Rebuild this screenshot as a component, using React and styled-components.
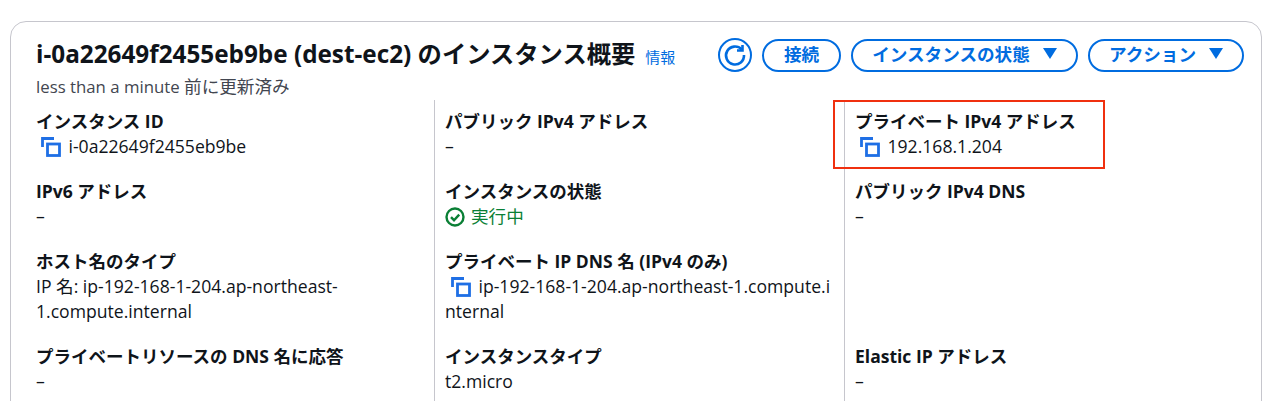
import React from 'react';
import styled, { createGlobalStyle } from 'styled-components';

const GlobalStyle = createGlobalStyle`
  html, body {
    margin: 0;
    height: 401px;
    overflow: hidden;
    background: #fff;
    font-family: "Open Sans", "Noto Sans CJK JP", sans-serif;
    color: #0f141a;
  }
`;

const Page = styled.div`
  height: 401px;
  overflow: hidden;
  padding: 21px 8px 0 10px;
  box-sizing: border-box;
`;

const Card = styled.div`
  position: relative;
  height: 420px;
  box-sizing: border-box;
  border: 1px solid #c6c6cd;
  border-radius: 16px;
  padding: 16px 17px 0 25px;
`;

const Header = styled.div`
  display: flex;
  justify-content: space-between;
  align-items: flex-start;
  height: 32px;
`;

const Title = styled.h1`
  margin: 0;
  font-size: 24.3px;
  line-height: 32px;
  font-weight: 700;
  white-space: nowrap;
`;

const InfoLink = styled.a`
  margin-left: 10px;
  font-size: 15px;
  font-weight: 400;
  color: #006ce0;
`;

const Actions = styled.div`
  display: flex;
  align-items: center;
  gap: 10px;
`;

const Pill = styled.button`
  display: flex;
  align-items: center;
  justify-content: center;
  gap: 13px;
  box-sizing: border-box;
  height: 33px;
  width: ${(p) => p.$width}px;
  padding: 0 0 3px;
  background: #fff;
  border: 2px solid #006ce0;
  border-radius: 17px;
  color: #006ce0;
  font-family: inherit;
  font-size: 17.6px;
  font-weight: 700;
`;

const RoundButton = styled.button`
  display: flex;
  align-items: center;
  justify-content: center;
  box-sizing: border-box;
  width: 34px;
  height: 34px;
  padding: 0;
  background: #fff;
  border: 2px solid #006ce0;
  border-radius: 50%;
`;

const Updated = styled.div`
  font-size: 16.8px;
  line-height: 26px;
  height: 27px;
  color: #424650;
  margin-top: 3px;
`;

const UpdatedSuffix = styled.span`
  font-size: 17.6px;
`;

const Grid = styled.div`
  display: grid;
  grid-template-columns: 398px 410px 1fr;
`;

const Cell = styled.div`
  box-sizing: border-box;
  padding: 9px 10px 11px ${(p) => (p.$first ? 0 : 10)}px;
  border-left: ${(p) => (p.$first ? 'none' : '1px solid #c6c6cd')};
  min-width: 0;
`;

const Label = styled.div`
  font-size: 17.5px;
  line-height: 25px;
  height: 25px;
  font-weight: 700;
`;

const Value = styled.div`
  font-size: 17.6px;
  line-height: 25px;
  word-break: ${(p) => (p.$breakAll ? 'break-all' : 'normal')};
  color: ${(p) => (p.$ok ? '#0a7f35' : 'inherit')};
`;

const IconSlot = styled.span`
  display: inline-block;
  vertical-align: -4px;
  margin: 0 ${(p) => (p.$ok ? 6 : 7.5)}px 0 ${(p) => p.$indent}px;
`;

const Highlight = styled.div`
  position: absolute;
  left: 822px;
  top: 78px;
  width: 268px;
  height: 65px;
  border: 2px solid #f0300f;
  pointer-events: none;
`;

const CopyIcon = () => (
  <svg width="20" height="20" viewBox="0 0 20 20" fill="none" stroke="#1f6fe5" strokeWidth="2.8" style={{ display: 'block' }}>
    <path d="M1.5 10V1.5H13" />
    <rect x="6.5" y="7" width="12" height="11.5" />
  </svg>
);

const RefreshIcon = () => (
  <svg width="24" height="24" viewBox="0 0 24 24" fill="none" stroke="#006ce0" strokeWidth="2.6">
    <path d="M18.6 6.4A9 9 0 1 0 21 12" />
    <path d="M19.5 2v5.5H14" />
  </svg>
);

const CheckIcon = () => (
  <svg width="20" height="20" viewBox="0 0 20 20" fill="none" stroke="#0a7f35" strokeWidth="2.4" style={{ display: 'block' }}>
    <circle cx="10" cy="10" r="8.5" />
    <path d="M6 10.2l3 3 5.2-5.6" />
  </svg>
);

const Caret = () => (
  <svg width="14" height="11" viewBox="0 0 14 11" fill="#006ce0">
    <path d="M0 0h14L7 11z" />
  </svg>
);

const Copyable = ({ children, indent = 5 }) => (
  <Value $breakAll>
    <IconSlot $indent={indent}><CopyIcon /></IconSlot>
    {children}
  </Value>
);

const Field = ({ label, first, children }) => (
  <Cell $first={first}>
    <Label>{label}</Label>
    {children}
  </Cell>
);

export default function App() {
  return (
    <>
      <GlobalStyle />
      <Page>
        <Card>
          <Header>
            <Title>
              i-0a22649f2455eb9be (dest-ec2) のインスタンス概要
              <InfoLink>情報</InfoLink>
            </Title>
            <Actions>
              <RoundButton><RefreshIcon /></RoundButton>
              <Pill $width={79}>接続</Pill>
              <Pill $width={227}>インスタンスの状態<Caret /></Pill>
              <Pill $width={156}>アクション<Caret /></Pill>
            </Actions>
          </Header>
          <Updated>less than a minute <UpdatedSuffix>前に更新済み</UpdatedSuffix></Updated>
          <Grid>
            <Field first label="インスタンス ID">
              <Copyable>i-0a22649f2455eb9be</Copyable>
            </Field>
            <Field label="パブリック IPv4 アドレス">
              <Value>–</Value>
            </Field>
            <Field label="プライベート IPv4 アドレス">
              <Copyable>192.168.1.204</Copyable>
            </Field>

            <Field first label="IPv6 アドレス">
              <Value>–</Value>
            </Field>
            <Field label="インスタンスの状態">
              <Value $ok>
                <IconSlot $ok $indent={0}><CheckIcon /></IconSlot>実行中
              </Value>
            </Field>
            <Field label="パブリック IPv4 DNS">
              <Value>–</Value>
            </Field>

            <Field first label="ホスト名のタイプ">
              <Value>IP 名: ip-192-168-1-204.ap-northeast-1.compute.internal</Value>
            </Field>
            <Field label="プライベート IP DNS 名 (IPv4 のみ)">
              <Copyable indent={6}>ip-192-168-1-204.ap-northeast-1.compute.internal</Copyable>
            </Field>
            <Cell />

            <Field first label="プライベートリソースの DNS 名に応答">
              <Value>–</Value>
            </Field>
            <Field label="インスタンスタイプ">
              <Value>t2.micro</Value>
            </Field>
            <Field label="Elastic IP アドレス">
              <Value>–</Value>
            </Field>
          </Grid>
          <Highlight />
        </Card>
      </Page>
    </>
  );
}
